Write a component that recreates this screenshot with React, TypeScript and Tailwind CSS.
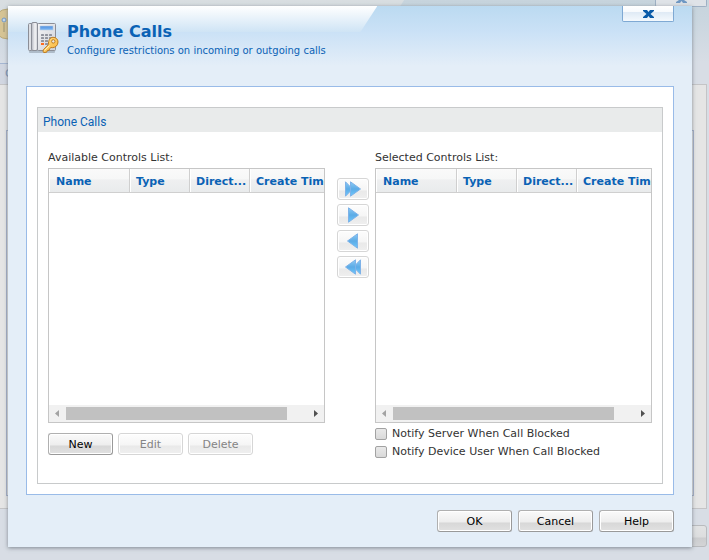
import { useState } from 'react';
import type { ReactNode } from 'react';
import clsx from 'clsx';

const COLUMNS = [
  { label: 'Name', width: 'w-[81px] pl-[7px]' },
  { label: 'Type', width: 'w-[60px] pl-[6px]' },
  { label: 'Direction', short: 'Direct...', width: 'w-[60px] pl-[6px]' },
  { label: 'Create Time', width: 'w-[142px] pl-[6px]' },
];

const MOVE_BUTTONS = [
  { label: 'Add all', double: true, left: false },
  { label: 'Add', double: false, left: false },
  { label: 'Remove', double: false, left: true },
  { label: 'Remove all', double: true, left: true },
];

function PhoneIcon() {
  return (
    <svg width="32" height="32" viewBox="0 0 32 32" aria-hidden className="shrink-0">
      <defs>
        <linearGradient id="body" x1="0" y1="0" x2="1" y2="1">
          <stop offset="0" stopColor="#f4f4f6" />
          <stop offset="1" stopColor="#cfd2d8" />
        </linearGradient>
        <linearGradient id="handset" x1="0" y1="0" x2="1" y2="0">
          <stop offset="0" stopColor="#b4b7c0" />
          <stop offset="0.6" stopColor="#f4f4f6" />
          <stop offset="1" stopColor="#c9ccd2" />
        </linearGradient>
        <linearGradient id="screen" x1="0" y1="0" x2="0" y2="1">
          <stop offset="0" stopColor="#4f8ede" />
          <stop offset="1" stopColor="#7fbaf5" />
        </linearGradient>
        <linearGradient id="key" x1="0" y1="0" x2="1" y2="1">
          <stop offset="0" stopColor="#ffe08a" />
          <stop offset="1" stopColor="#f9b236" />
        </linearGradient>
      </defs>
      <rect x="2" y="28" width="26" height="3" rx="1" fill="#6f7985" opacity="0.4" />
      <rect x="10.5" y="1.5" width="18" height="27" rx="1" fill="url(#body)" stroke="#8b8e97" />
      <rect x="1.5" y="1.5" width="4" height="27" rx="1" fill="#dddfe4" stroke="#8b8e97" />
      <rect x="4.5" y="0.5" width="6" height="28" rx="1.5" fill="url(#handset)" stroke="#8b8e97" />
      <rect x="13" y="4" width="13" height="4" fill="url(#screen)" stroke="#b9cbe2" strokeWidth="0.6" />
      <g fill="#90949e">
        {[12, 15, 18, 21].map((y) =>
          [14, 18, 22].map((x) => <rect key={`${x}-${y}`} x={x} y={y} width="3" height="2" rx="0.5" />),
        )}
      </g>
      <rect x="14" y="21" width="3" height="2" fill="#ff6a1e" />
      <path
        d="M26 15.3c3 0 5 2 5 4.700 0 3.400-2.600 5.700-5.800 5.700l-1.200-.2-1.500 1.300-.4 1.500-1.800.3-.6 1.600-2.700.4-1-.9.300-1.900 5.300-5.300c-.5-4 1.400-7.200 4.400-7.200z"
        fill="url(#key)"
        stroke="#bd7c22"
      />
      <path d="M17.500 28.500l5-5" stroke="#fff0b8" fill="none" />
      <circle cx="26.300" cy="19.400" r="1.700" fill="#e8e9ec" stroke="#bd7c22" />
    </svg>
  );
}

function ArrowIcon({ double, left }: { double: boolean; left: boolean }) {
  return (
    <svg width="18" height="16" viewBox="0 0 18 16" aria-hidden className={clsx(left && '-scale-x-100')}>
      <defs>
        <linearGradient id="arrow" x1="0" y1="0" x2="0" y2="1">
          <stop offset="0" stopColor="#8ccbf4" />
          <stop offset="0.5" stopColor="#5cabe6" />
          <stop offset="1" stopColor="#6cc8fc" />
        </linearGradient>
      </defs>
      <g fill="url(#arrow)" stroke="#7eb2e8">
        {double ? (
          <>
            <path d="M1.500 0.800L8.500 8L1.500 15.200z" />
            <path d="M6.500 0.800L16.500 8L6.500 15.200z" />
          </>
        ) : (
          <path d="M4.500 0.800L14.500 8L4.500 15.200z" />
        )}
      </g>
    </svg>
  );
}

function CloseIcon() {
  return (
    <svg width="11" height="8" viewBox="0 0 11 8" aria-hidden>
      <path d="M0 0h4l1.500 2L7 0h4v1L7.500 4 11 7v1H7L5.500 6 4 8H0V7l3.500-3L0 1z" fill="#0a5ba8" />
    </svg>
  );
}

function DialogButton({ children, disabled, width }: { children: ReactNode; disabled?: boolean; width: string }) {
  return (
    <button
      type="button"
      disabled={disabled}
      className={clsx(
        'h-[22px] rounded-[3px] border pt-[2px] text-center leading-[18px] shadow-[inset_0_0_0_1px_#ffffff]',
        width,
        disabled
          ? 'border-[#d6d6d6] bg-[linear-gradient(#fdfdfd_0%,#f5f5f5_57%,#e9e9e9_58%,#efefef_100%)] text-[#848484]'
          : 'border-[#b0b0b0] border-r-[#999999] border-b-[#999999] bg-[linear-gradient(#fafafa_0%,#ededed_57%,#d7d7d7_58%,#e1e1e1_100%)] text-black',
      )}
    >
      {children}
    </button>
  );
}

function ScrollBar() {
  return (
    <div className="flex h-[17px] items-center bg-[#f1f1f1]" aria-hidden>
      <svg width="17" height="17" viewBox="0 0 17 17" className="shrink-0">
        <path d="M10 5v7L6 8.500z" fill="#a3a3a3" />
      </svg>
      <div className="h-[13px] flex-1">
        <div className="h-full w-11/12 bg-[#c1c1c1]" />
      </div>
      <svg width="17" height="17" viewBox="0 0 17 17" className="shrink-0">
        <path d="M7 5v7l4-3.500z" fill="#505050" />
      </svg>
    </div>
  );
}

function ControlsList({ title, children }: { title: string; children: ReactNode }) {
  return (
    <div className="min-w-0 flex-1">
      <h3 className="mb-[3px] leading-[14px]">{title}</h3>
      <div className="flex h-[255px] flex-col justify-between overflow-hidden border border-[#c6c6c6] bg-white">
        <div className="overflow-hidden">
          <table aria-label={title} className="w-[343px] table-fixed border-separate border-spacing-0">
            <thead>
              <tr>
                {COLUMNS.map((col) => (
                  <th
                    key={col.label}
                    title={col.label}
                    className={clsx(
                      'h-6 overflow-hidden border-r border-b border-[#cfcfcf] bg-[linear-gradient(#fafafa_0%,#f6f7f7_45%,#eff0f1_46%,#e9ebec_100%)] pt-1 pb-0 text-left font-bold whitespace-nowrap text-[#0a62b5]',
                      'shadow-[inset_1px_0_0_#ffffff]',
                      col.width,
                    )}
                  >
                    {col.short ?? col.label}
                  </th>
                ))}
              </tr>
            </thead>
          </table>
        </div>
        <ScrollBar />
      </div>
      {children}
    </div>
  );
}

function CheckOption({ id, label }: { id: string; label: string }) {
  const [checked, setChecked] = useState(false);

  return (
    <div className="flex h-[18px] items-center gap-[5px]">
      <input
        id={id}
        type="checkbox"
        checked={checked}
        onChange={(e) => setChecked(e.target.checked)}
        className="h-3 w-3 shrink-0 appearance-none rounded-[2px] border border-[#a2a2a2] bg-[linear-gradient(#e9e9e9,#d9d9d9)] checked:bg-none checked:bg-[#0a62b5]"
      />
      <label htmlFor={id} className="pt-px">
        {label}
      </label>
    </div>
  );
}

// Dimmed parent window that shows around the edges of the dialog
function ParentWindow() {
  return (
    <div className="absolute inset-0 flex flex-col overflow-hidden bg-[#d8dde5]" aria-hidden>
      <div className="relative h-[63px] shrink-0 bg-[linear-gradient(#c7d4dd_0%,#cad6df_30%,#d8dde5_100%)]">
        <div className="h-7 w-[57%] bg-[linear-gradient(#d9dee1,#d4dce2)] [clip-path:polygon(0_0,100%_0,calc(100%-18px)_100%,0_100%)]" />
        <svg width="30" height="32" viewBox="0 0 30 32" className="absolute top-2 -left-2">
          <circle cx="16" cy="16" r="15" fill="#d6c494" stroke="#b9a878" />
          <circle cx="12" cy="12" r="2" fill="#c3d7eb" stroke="#7399c4" />
          <path d="M12 15v9" stroke="#9b9373" />
        </svg>
        <div className="absolute top-0 right-[2px] flex h-[7px] w-[52px] items-start justify-center rounded-b-[2px] border border-t-0 border-[#9eb0c4] bg-[#dfe3e8]">
          <svg width="11" height="4" viewBox="0 0 11 4">
            <path d="M3 0h5l3 2v1H7L5.500 1 4 3H0V2z" fill="#6f98c4" />
          </svg>
        </div>
      </div>
      <div className="h-[21px] shrink-0 border-t border-[#a5b6d2] bg-[#d1d6e1] pl-[5px] leading-5 text-[#7f97b8] [clip-path:inset(0_calc(100%-8px)_0_0)]">
        C
      </div>
      <div className="mr-[2px] h-[425px] shrink-0 border border-l-0 border-[#c4c4c6] bg-[#e5e5e5] pt-[45px] pr-[12px] pb-3 pl-[6px]">
        <div className="h-full border border-[#a6b3cb]" />
      </div>
      <div className="mt-4 mr-[2px] h-[22px] w-20 shrink-0 self-end rounded-[3px] border border-[#b9bbbe] bg-[linear-gradient(#e2e3e4_0%,#dcddde_57%,#cccdcf_58%,#d3d4d6_100%)]" />
    </div>
  );
}

export default function App() {
  return (
    <div className="relative min-h-screen overflow-hidden pt-[6px] pr-[17px] pb-[13px] pl-2 font-['DejaVu_Sans',Verdana,sans-serif] text-[11px] text-[#333333]">
      <ParentWindow />

      <main
        role="dialog"
        aria-labelledby="dialog-title"
        className="relative bg-[#e4eef8] px-[18px] pb-[15px] shadow-[0_1px_4px_rgba(90,100,110,0.7)]"
      >
        <div className="absolute inset-x-0 top-0 h-[60px] bg-[linear-gradient(#bbdaf1_0%,#cae1f6_42%,#e4eef8_100%)]">
          <div className="h-[26px] w-[54%] bg-[linear-gradient(#ffffff_0%,#cfe4f5_100%)] [clip-path:polygon(0_0,100%_0,calc(100%-17px)_100%,0_100%)]" />
        </div>

        <header className="relative flex h-20 items-start justify-between">
          <div className="flex gap-2 pt-4 pl-[1px] text-[#0a62b5]">
            <PhoneIcon />
            <div>
              <h1 id="dialog-title" className="text-[16px] leading-5 font-bold">
                Phone Calls
              </h1>
              <p className="text-[10px] leading-[18px]">Configure restrictions on incoming or outgoing calls</p>
            </div>
          </div>
          <button
            type="button"
            aria-label="Close"
            className="flex h-4 w-[52px] items-center justify-center rounded-b-[2px] border border-t-0 border-[#7fa9d3] bg-[linear-gradient(#ffffff_0%,#f7fafd_40%,#dfeaf5_41%,#f4f9fd_100%)]"
          >
            <CloseIcon />
          </button>
        </header>

        <div className="relative border border-[#99bbe8] bg-white px-[10px] pt-5 pb-[10px]">
          <section className="border border-[#c8cacb]">
            <h2 className="h-6 bg-[#e9ebeb] pl-[5px] font-[Roboto,Tahoma,sans-serif] text-[12px] leading-[29px] text-[#0a62b5]">
              Phone Calls
            </h2>
            <div className="flex px-[10px] pt-[19px] pb-[22px]">
              <ControlsList title="Available Controls List:">
                <div className="mt-[10px] flex gap-[5px]">
                  <DialogButton width="w-[65px]">New</DialogButton>
                  <DialogButton width="w-[65px]" disabled>
                    Edit
                  </DialogButton>
                  <DialogButton width="w-[65px]" disabled>
                    Delete
                  </DialogButton>
                </div>
              </ControlsList>

              <div className="flex w-[50px] shrink-0 flex-col gap-1 pt-[27px] pl-3">
                {MOVE_BUTTONS.map((b) => (
                  <button
                    key={b.label}
                    type="button"
                    aria-label={b.label}
                    className="flex h-[22px] w-8 items-center justify-center rounded-[3px] border border-[#d6d6d6] bg-[linear-gradient(#fdfdfd_0%,#f5f5f5_57%,#e9e9e9_58%,#efefef_100%)] shadow-[inset_0_0_0_1px_#ffffff]"
                  >
                    <ArrowIcon double={b.double} left={b.left} />
                  </button>
                ))}
              </div>

              <ControlsList title="Selected Controls List:">
                <div className="mt-[2px]">
                  <CheckOption id="notify-server" label="Notify Server When Call Blocked" />
                  <CheckOption id="notify-user" label="Notify Device User When Call Blocked" />
                </div>
              </ControlsList>
            </div>
          </section>
        </div>

        <footer className="relative mt-[15px] flex justify-end gap-[6px]">
          <DialogButton width="w-[75px]">OK</DialogButton>
          <DialogButton width="w-[75px]">Cancel</DialogButton>
          <DialogButton width="w-[75px]">Help</DialogButton>
        </footer>
      </main>
    </div>
  );
}
